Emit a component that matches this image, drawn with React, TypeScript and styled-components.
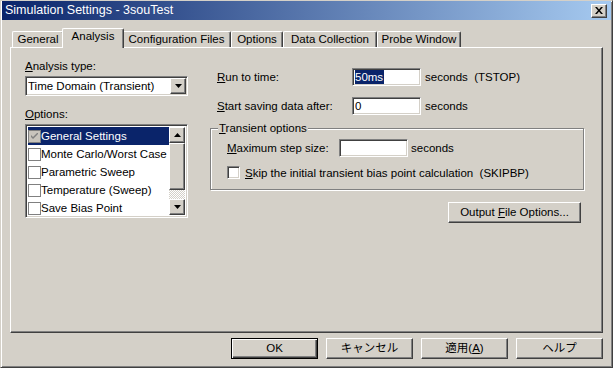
import React from 'react';
import styled, { createGlobalStyle, css } from 'styled-components';

const FACE = '#d4d0c8';
const SHADOW = '#808080';
const DARK = '#404040';
const HILITE = '#ffffff';
const SELECT = '#0a246a';

const GlobalStyle = createGlobalStyle`
  html, body {
    margin: 0;
    padding: 0;
    background: ${FACE};
  }
  body {
    font-family: "Liberation Sans", "Noto Sans CJK JP", sans-serif;
    font-size: 11.5px;
    color: #000;
  }
  * {
    box-sizing: border-box;
  }
`;

const raised = css`
  border: 1px solid;
  border-color: ${HILITE} ${DARK} ${DARK} ${HILITE};
  box-shadow: inset -1px -1px ${SHADOW};
  background: ${FACE};
`;

const sunken = css`
  border: 1px solid;
  border-color: ${SHADOW} ${HILITE} ${HILITE} ${SHADOW};
  box-shadow: inset 1px 1px ${DARK}, inset -1px -1px ${FACE};
  background: #fff;
`;

const Window = styled.div`
  width: 613px;
  height: 368px;
  display: flex;
  flex-direction: column;
  border: 1px solid;
  border-color: ${FACE} ${DARK} ${DARK} ${FACE};
  box-shadow: inset 1px 1px ${HILITE}, inset -1px -1px ${SHADOW};
  background: ${FACE};
`;

const TitleBar = styled.div`
  height: 19px;
  margin: 0 1px;
  display: flex;
  align-items: center;
  justify-content: space-between;
  padding: 0 4px 0 3px;
  background: linear-gradient(to right, ${SELECT}, #a6caf0);
  color: #fff;
  font-size: 12.5px;
  line-height: 19px;
  white-space: nowrap;
`;

const CloseButton = styled.div`
  ${raised};
  width: 16px;
  height: 14px;
  display: flex;
  align-items: center;
  justify-content: center;
`;

const Body = styled.div`
  flex: 1;
  display: flex;
  flex-direction: column;
  padding: 8px 9px 0 9px;
`;

const TabRow = styled.div`
  height: 19px;
  display: flex;
  align-items: flex-end;
  padding-left: 2px;
`;

const Tab = styled.div<{ $width: number; $active?: boolean }>`
  width: ${(p) => p.$width}px;
  height: 16px;
  line-height: 14px;
  text-align: center;
  white-space: nowrap;
  background: ${FACE};
  border-top: 1px solid ${HILITE};
  border-left: 1px solid ${HILITE};
  border-right: 1px solid ${DARK};
  box-shadow: inset -1px 0 ${SHADOW};
  border-radius: 2px 2px 0 0;
  ${(p) =>
    p.$active &&
    css`
      position: relative;
      z-index: 1;
      width: ${p.$width + 4}px;
      height: 20px;
      margin: 0 -2px -1px;
    `}
`;

const Panel = styled.div`
  height: 286px;
  display: flex;
  gap: 22px;
  padding: 11px 0 0 14px;
  border: 1px solid;
  border-color: ${HILITE} ${DARK} ${DARK} ${HILITE};
  box-shadow: inset -1px -1px ${SHADOW};
`;

const LeftColumn = styled.div`
  width: 163px;
  display: flex;
  flex-direction: column;
`;

const RightColumn = styled.div`
  width: 375px;
  display: flex;
  flex-direction: column;
  padding-top: 9px;
`;

const Label = styled.div<{ $gap?: number }>`
  line-height: 14px;
  margin-top: ${(p) => p.$gap ?? 0}px;
  white-space: nowrap;
`;

const Key = styled.span`
  text-decoration: underline;
  text-underline-offset: 1px;
`;

const Combo = styled.div`
  ${sunken};
  margin-top: 3px;
  height: 20px;
  display: flex;
  align-items: center;
  padding: 1px 1px 1px 2px;
`;

const ComboText = styled.div`
  flex: 1;
  line-height: 16px;
  white-space: nowrap;
  overflow: hidden;
`;

const ArrowButton = styled.div`
  ${raised};
  width: 16px;
  height: 16px;
  display: flex;
  align-items: center;
  justify-content: center;
  flex-shrink: 0;
`;

const ListBox = styled.div`
  ${sunken};
  margin-top: 3px;
  height: 94px;
  display: flex;
  padding: 2px;
`;

const ListItems = styled.div`
  flex: 1;
  display: flex;
  flex-direction: column;
  overflow: hidden;
`;

const ListRow = styled.div<{ $selected?: boolean }>`
  height: 18px;
  line-height: 18px;
  display: flex;
  align-items: center;
  white-space: nowrap;
  background: ${(p) => (p.$selected ? SELECT : 'transparent')};
  color: ${(p) => (p.$selected ? '#fff' : '#000')};
`;

const FlatCheck = styled.div<{ $checked?: boolean }>`
  width: 13px;
  height: 13px;
  border: 1px solid ${SHADOW};
  background: ${(p) => (p.$checked ? '#c8c4bc' : '#fff')};
  display: flex;
  align-items: center;
  justify-content: center;
  flex-shrink: 0;
`;

const ScrollBar = styled.div`
  width: 16px;
  display: flex;
  flex-direction: column;
`;

const Thumb = styled.div`
  ${raised};
  height: 47px;
`;

const Track = styled.div`
  flex: 1;
  background-color: ${FACE};
  background-image: conic-gradient(#fff 25%, ${FACE} 0 50%, #fff 0 75%, ${FACE} 0);
  background-size: 2px 2px;
`;

const FieldRow = styled.div<{ $gap?: number; $indent?: number }>`
  height: 18px;
  display: flex;
  align-items: center;
  margin-top: ${(p) => p.$gap ?? 0}px;
  padding-left: ${(p) => p.$indent ?? 0}px;
  white-space: nowrap;
`;

const FieldLabel = styled.div<{ $width: number }>`
  width: ${(p) => p.$width}px;
  flex-shrink: 0;
`;

const TextBox = styled.div`
  ${sunken};
  width: 69px;
  height: 18px;
  padding: 1px 2px;
  line-height: 14px;
  flex-shrink: 0;
`;

const Highlight = styled.span`
  background: ${SELECT};
  color: #fff;
  display: inline-block;
  line-height: 14px;
  padding: 0 1px 0 0;
`;

const Unit = styled.span<{ $gap: number }>`
  margin-left: ${(p) => p.$gap}px;
`;

const Group = styled.fieldset`
  width: 374px;
  margin: 6px 0 0;
  padding: 4px 0 8px 16px;
  border: 1px solid ${SHADOW};
  box-shadow: inset 1px 1px ${HILITE}, 1px 1px ${HILITE};
  min-width: 0;
`;

const Legend = styled.legend`
  margin-left: -9px;
  padding: 0 1px;
  line-height: 14px;
  background: ${FACE};
`;

const CheckRow = styled.div`
  height: 17px;
  margin-top: 7px;
  display: flex;
  align-items: center;
  gap: 5px;
  white-space: nowrap;
`;

const SunkenCheck = styled.div`
  ${sunken};
  width: 13px;
  height: 13px;
  flex-shrink: 0;
`;

const Button = styled.button<{ $width: number; $default?: boolean }>`
  ${raised};
  width: ${(p) => p.$width}px;
  height: 21px;
  padding: 0;
  font: inherit;
  color: #000;
  line-height: 17px;
  white-space: nowrap;
  ${(p) =>
    p.$default &&
    css`
      border-color: #000;
      box-shadow: inset 1px 1px ${HILITE}, inset -1px -1px ${DARK}, inset -2px -2px ${SHADOW};
    `}
`;

const OutputButton = styled(Button)`
  align-self: flex-end;
  margin: 12px 4px 0 0;
`;

const ButtonRow = styled.div`
  display: flex;
  justify-content: flex-end;
  gap: 8px;
  margin-top: 5px;
`;

const Arrow = ({ up }: { up?: boolean }) => (
  <svg width="7" height="4" viewBox="0 0 7 4">
    <path d={up ? 'M3.5 0 L7 4 L0 4 Z' : 'M0 0 L7 0 L3.5 4 Z'} fill="#000" />
  </svg>
);

const CloseGlyph = () => (
  <svg width="8" height="7" viewBox="0 0 8 7">
    <path d="M0 0h2l2 2.5L6 0h2L5 3.5 8 7H6L4 4.5 2 7H0l3-3.5z" fill="#000" />
  </svg>
);

const CheckMark = ({ color }: { color: string }) => (
  <svg width="7" height="7" viewBox="0 0 7 7">
    <path d="M0 2 L0 4 L2 6 L7 1 L7 -1 L2 4 Z" fill={color} />
  </svg>
);

const tabs = [
  { label: 'General', width: 52 },
  { label: 'Analysis', width: 58, active: true },
  { label: 'Configuration Files', width: 109 },
  { label: 'Options', width: 52 },
  { label: 'Data Collection', width: 94 },
  { label: 'Probe Window', width: 84 },
];

const options = [
  { label: 'General Settings', checked: true },
  { label: 'Monte Carlo/Worst Case' },
  { label: 'Parametric Sweep' },
  { label: 'Temperature (Sweep)' },
  { label: 'Save Bias Point' },
];

const App: React.FC = () => (
  <>
    <GlobalStyle />
    <Window>
      <TitleBar>
        <span>Simulation Settings - 3souTest</span>
        <CloseButton>
          <CloseGlyph />
        </CloseButton>
      </TitleBar>
      <Body>
        <TabRow>
          {tabs.map((t) => (
            <Tab key={t.label} $width={t.width} $active={t.active}>
              {t.label}
            </Tab>
          ))}
        </TabRow>
        <Panel>
          <LeftColumn>
            <Label>
              <Key>A</Key>nalysis type:
            </Label>
            <Combo>
              <ComboText>Time Domain (Transient)</ComboText>
              <ArrowButton>
                <Arrow />
              </ArrowButton>
            </Combo>
            <Label $gap={11}>
              <Key>O</Key>ptions:
            </Label>
            <ListBox>
              <ListItems>
                {options.map((o) => (
                  <ListRow key={o.label} $selected={o.checked}>
                    <FlatCheck $checked={o.checked}>
                      {o.checked && <CheckMark color="#808080" />}
                    </FlatCheck>
                    {o.label}
                  </ListRow>
                ))}
              </ListItems>
              <ScrollBar>
                <ArrowButton>
                  <Arrow up />
                </ArrowButton>
                <Thumb />
                <Track />
                <ArrowButton>
                  <Arrow />
                </ArrowButton>
              </ScrollBar>
            </ListBox>
          </LeftColumn>
          <RightColumn>
            <FieldRow $indent={7}>
              <FieldLabel $width={135}>
                <Key>R</Key>un to time:
              </FieldLabel>
              <TextBox>
                <Highlight>50ms</Highlight>
              </TextBox>
              <Unit $gap={4}>seconds&nbsp;&nbsp;(TSTOP)</Unit>
            </FieldRow>
            <FieldRow $gap={11} $indent={7}>
              <FieldLabel $width={135}>
                <Key>S</Key>tart saving data after:
              </FieldLabel>
              <TextBox>0</TextBox>
              <Unit $gap={4}>seconds</Unit>
            </FieldRow>
            <Group>
              <Legend>
                <Key>T</Key>ransient options
              </Legend>
              <FieldRow>
                <FieldLabel $width={112}>
                  <Key>M</Key>aximum step size:
                </FieldLabel>
                <TextBox />
                <Unit $gap={3}>seconds</Unit>
              </FieldRow>
              <CheckRow>
                <SunkenCheck />
                <span>
                  <Key>S</Key>kip the initial transient bias point calculation&nbsp;&nbsp;(SKIPBP)
                </span>
              </CheckRow>
            </Group>
            <OutputButton $width={133}>
              Output <Key>F</Key>ile Options...
            </OutputButton>
          </RightColumn>
        </Panel>
        <ButtonRow>
          <Button $width={87} $default>
            OK
          </Button>
          <Button $width={87}>キャンセル</Button>
          <Button $width={87}>
            適用(<Key>A</Key>)
          </Button>
          <Button $width={87}>ヘルプ</Button>
        </ButtonRow>
      </Body>
    </Window>
  </>
);

export default App;
